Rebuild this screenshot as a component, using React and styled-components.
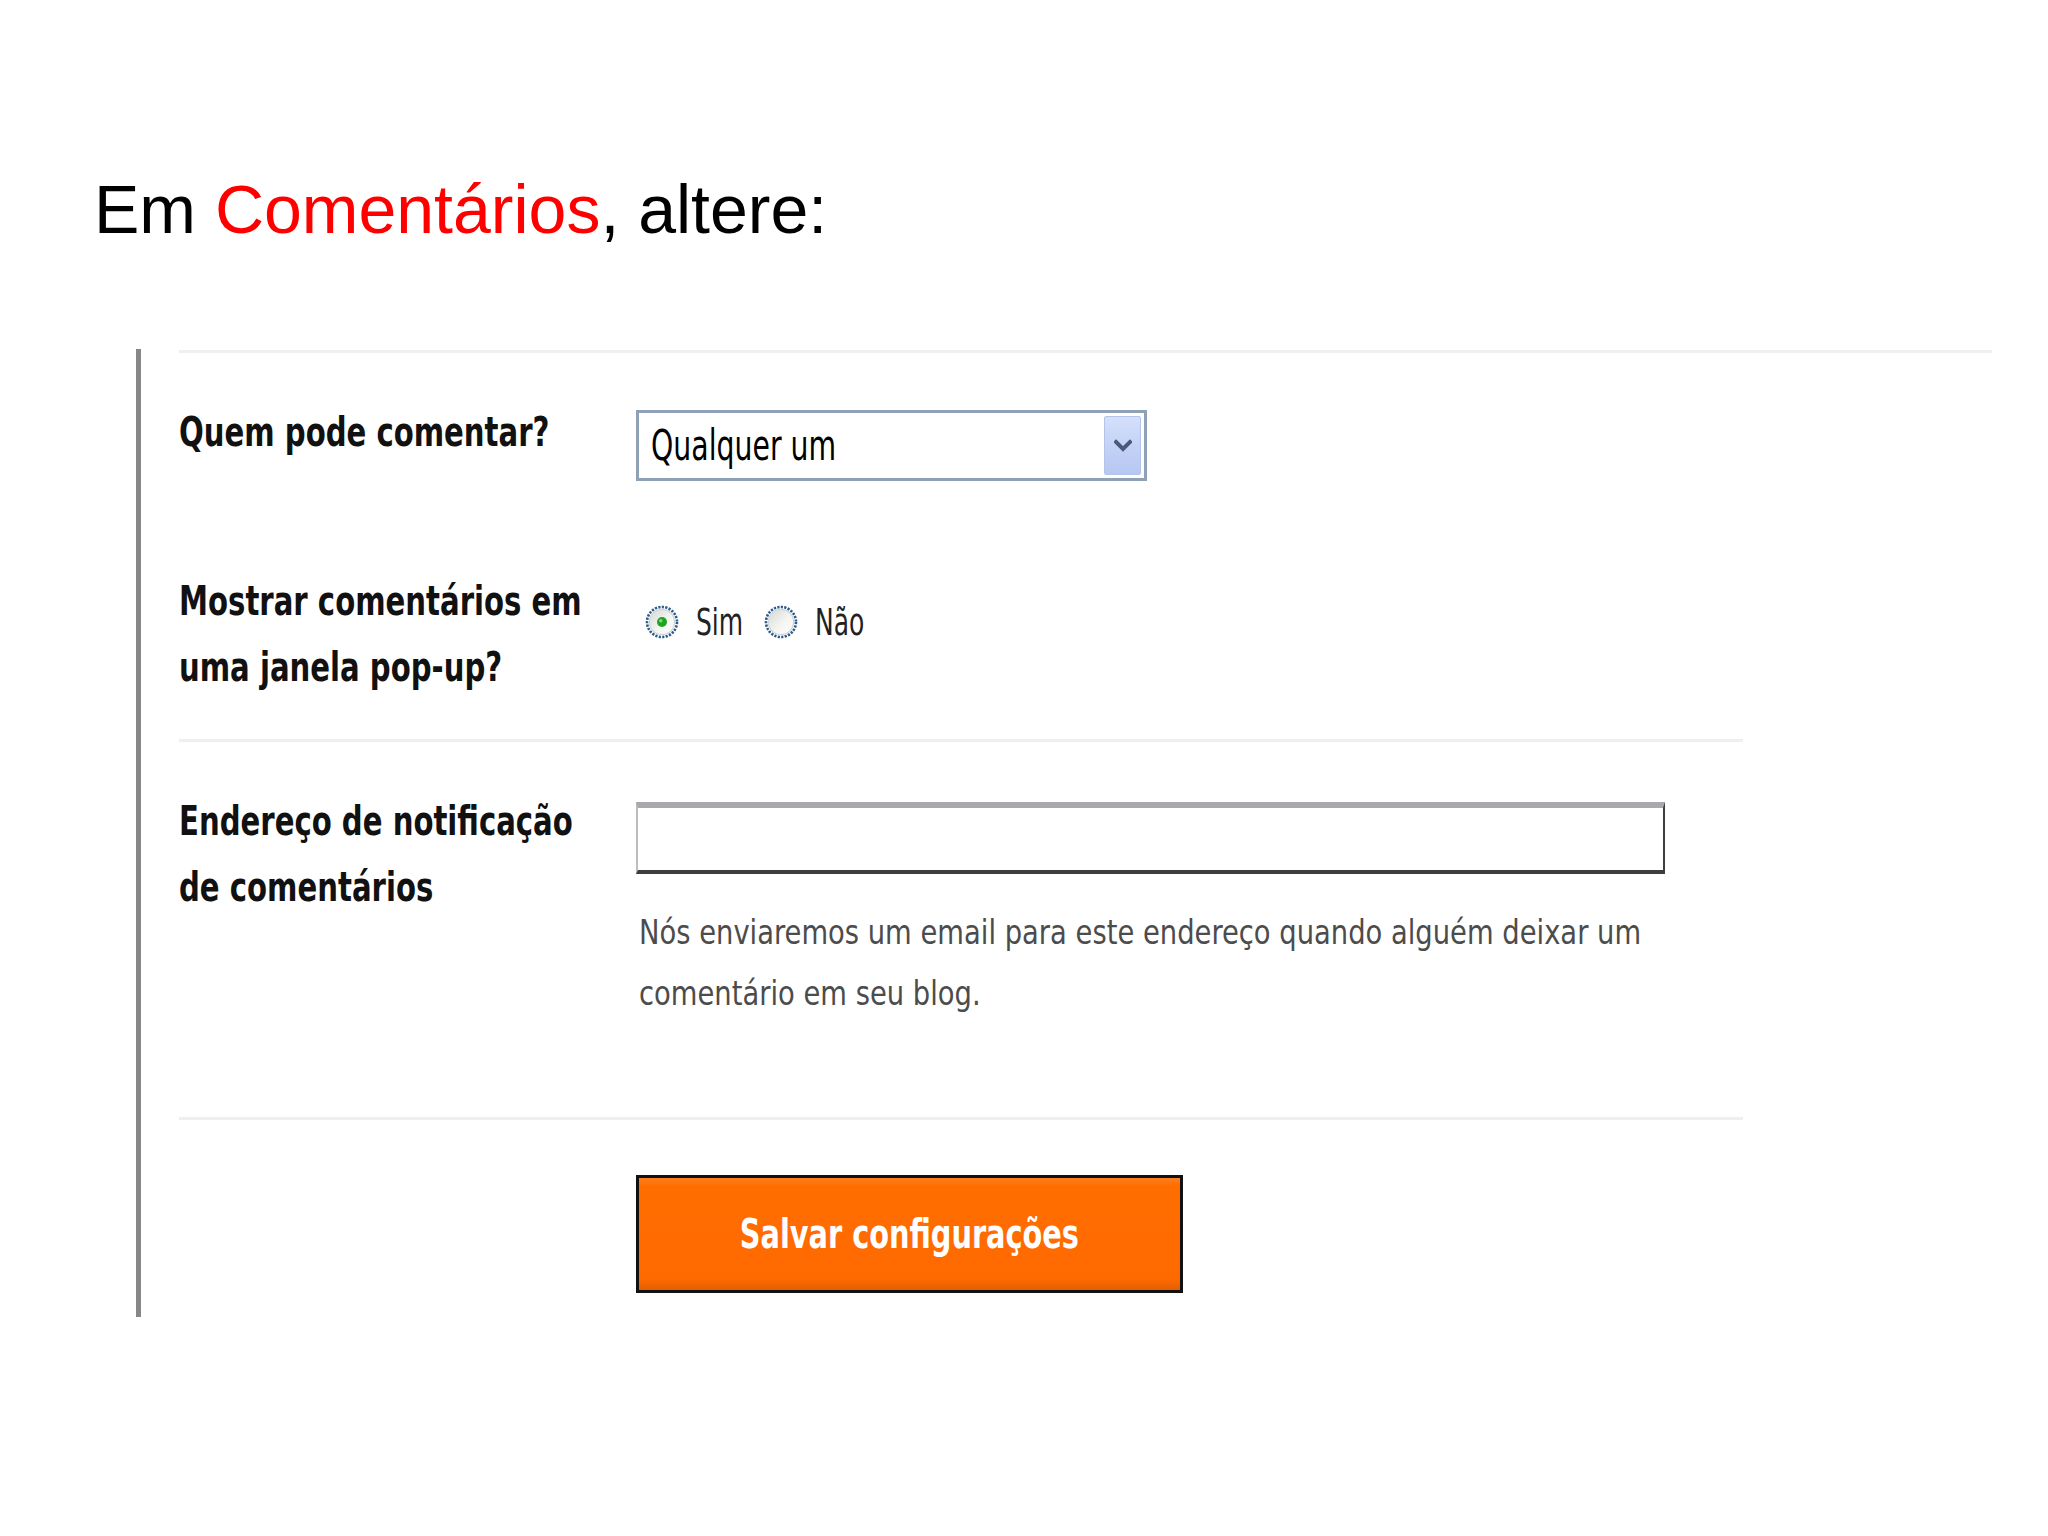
import React from 'react';
import styled, { createGlobalStyle } from 'styled-components';

const Global = createGlobalStyle`
  html, body { margin: 0; padding: 0; background: #ffffff; }
  body { width: 2048px; min-height: 1536px; font-family: "DejaVu Sans", sans-serif; }
  * { box-sizing: border-box; }
`;

const tahoma = `"DejaVu Sans Condensed", "DejaVu Sans", sans-serif`;

const Page = styled.main`
  padding-top: 176px;
  min-height: 1536px;
`;

const Heading = styled.h1`
  margin: 0;
  padding-left: 94px;
  font-family: "Liberation Sans", Arial, sans-serif;
  font-weight: 400;
  font-size: 68px;
  line-height: 67px;
  color: #000000;
`;

const Red = styled.span`
  color: #ff0000;
`;

const Panel = styled.section`
  margin: 106px 0 0 136px;
  border-left: 5px solid #878787;
  padding: 1px 0 24px 38px;
`;

const Rule = styled.div`
  height: 3px;
  width: ${(p) => p.$w}px;
  margin-top: ${(p) => p.$mt || 0}px;
  background: #f0eef2;
`;

const Row = styled.div`
  display: grid;
  grid-template-columns: 457px 1fr;
  align-items: start;
  margin-top: ${(p) => p.$mt}px;
`;

const Squeeze = styled.span`
  display: inline-block;
  white-space: nowrap;
  transform: scaleX(${(p) => p.$sx});
  transform-origin: ${(p) => p.$origin || 'left center'};
`;

const Label = styled.div`
  font-family: ${tahoma};
  font-stretch: condensed;
  font-weight: 700;
  font-size: 41px;
  line-height: 66px;
  color: #111111;
  white-space: nowrap;
  transform: scaleX(0.79);
  transform-origin: left top;
`;

const Field = styled.div`
  display: flex;
  flex-direction: column;
  align-items: flex-start;
`;

const SelectBox = styled.div`
  margin-top: 11px;
  width: 511px;
  height: 71px;
  border: 3px solid #8ea1b5;
  background: #ffffff;
  display: flex;
  align-items: center;
  justify-content: space-between;
  padding: 0 3px 0 12px;
`;

const SelectText = styled(Squeeze)`
  font-family: ${tahoma};
  font-stretch: condensed;
  font-size: 42px;
  line-height: 1;
  color: #000000;
`;

const DropButton = styled.div`
  width: 37px;
  height: 59px;
  border: 1px solid #b3c3ea;
  border-radius: 2px;
  background: linear-gradient(180deg, #d5e0fb 0%, #c3d2f6 50%, #b6c7f2 100%);
  display: flex;
  align-items: center;
  justify-content: center;
`;

const RadioGroup = styled.div`
  margin-top: 34px;
  height: 40px;
  display: flex;
  align-items: center;
  padding-left: 9px;
`;

const RadioOption = styled.label`
  display: flex;
  align-items: center;
  margin-right: ${(p) => p.$mr || 0}px;
`;

const RadioText = styled.span`
  display: block;
  width: ${(p) => p.$w}px;
  margin-left: 17px;
  font-family: ${tahoma};
  font-stretch: condensed;
  font-size: 38px;
  line-height: 40px;
  color: #222222;
  white-space: nowrap;
`;

const TextInput = styled.input`
  margin-top: 14px;
  width: 1029px;
  height: 72px;
  padding: 0;
  border-style: solid;
  border-width: 6px 2px 4px 2px;
  border-color: #a9a8ac #3f3f42 #3d3d40 #bdbdbd;
  background: #ffffff;
  outline: none;
`;

const Helper = styled.p`
  margin: 28px 0 0 3px;
  font-family: ${tahoma};
  font-stretch: condensed;
  font-size: 34px;
  line-height: 61px;
  color: #4c4c4c;
  white-space: nowrap;
  transform: scaleX(0.895);
  transform-origin: left top;
`;

const ButtonRow = styled.div`
  margin-top: 55px;
  padding-left: 457px;
`;

const SaveButton = styled.button`
  width: 547px;
  height: 118px;
  padding: 0;
  border: 3px solid #111111;
  background: linear-gradient(180deg, #ff7f22 0%, #ff6d00 7%, #ff6a00 90%, #e35f00 100%);
  color: #ffffff;
  display: flex;
  align-items: center;
  justify-content: center;
  cursor: pointer;
`;

const ButtonText = styled(Squeeze)`
  font-family: ${tahoma};
  font-stretch: condensed;
  font-weight: 700;
  font-size: 41px;
  line-height: 1;
`;

const Chevron = () => (
  <svg width="18" height="14" viewBox="0 0 18 14">
    <polyline points="2,3 9,10 16,3" fill="none" stroke="#4b5877" strokeWidth="4" strokeLinecap="square" />
  </svg>
);

const Radio = ({ checked, id }) => (
  <svg width="34" height="34" viewBox="0 0 34 34">
    <defs>
      <linearGradient id={`fill-${id}`} x1="0" y1="0" x2="1" y2="1">
        <stop offset="0" stopColor="#d9d9d2" />
        <stop offset="0.55" stopColor="#f4f4f1" />
        <stop offset="1" stopColor="#ffffff" />
      </linearGradient>
    </defs>
    <circle cx="17" cy="17" r="15" fill="#ffffff" stroke="#2d5a86" strokeWidth="2.6" strokeDasharray="2.2 1.3" />
    <circle cx="17" cy="17" r="12.6" fill={`url(#fill-${id})`} stroke="#c9d5e2" strokeWidth="1.2" />
    {checked && (
      <>
        <circle cx="17" cy="17" r="5" fill="#21a321" />
        <circle cx="15.8" cy="15.8" r="1.8" fill="#7ad77a" />
      </>
    )}
  </svg>
);

export default function App() {
  return (
    <>
      <Global />
      <Page>
        <Heading>
          Em <Red>Comentários</Red>, altere:
        </Heading>
        <Panel>
          <Rule $w={1813} />
          <Row $mt={46}>
            <Label>Quem pode comentar?</Label>
            <Field>
              <SelectBox>
                <SelectText $sx={0.75}>Qualquer um</SelectText>
                <DropButton>
                  <Chevron />
                </DropButton>
              </SelectBox>
            </Field>
          </Row>
          <Row $mt={87}>
            <Label>
              Mostrar comentários em
              <br />
              uma janela pop-up?
            </Label>
            <Field>
              <RadioGroup>
                <RadioOption $mr={22}>
                  <Radio checked id="sim" />
                  <RadioText $w={46}>
                    <Squeeze $sx={0.73}>Sim</Squeeze>
                  </RadioText>
                </RadioOption>
                <RadioOption>
                  <Radio id="nao" />
                  <RadioText $w={52}>
                    <Squeeze $sx={0.73}>Não</Squeeze>
                  </RadioText>
                </RadioOption>
              </RadioGroup>
            </Field>
          </Row>
          <Rule $w={1564} $mt={39} />
          <Row $mt={46}>
            <Label>
              Endereço de notificação
              <br />
              de comentários
            </Label>
            <Field>
              <TextInput type="text" aria-label="Endereço de notificação de comentários" />
              <Helper>
                Nós enviaremos um email para este endereço quando alguém deixar um
                <br />
                comentário em seu blog.
              </Helper>
            </Field>
          </Row>
          <Rule $w={1564} $mt={93} />
          <ButtonRow>
            <SaveButton type="button">
              <ButtonText $sx={0.78} $origin="center center">
                Salvar configurações
              </ButtonText>
            </SaveButton>
          </ButtonRow>
        </Panel>
      </Page>
    </>
  );
}
